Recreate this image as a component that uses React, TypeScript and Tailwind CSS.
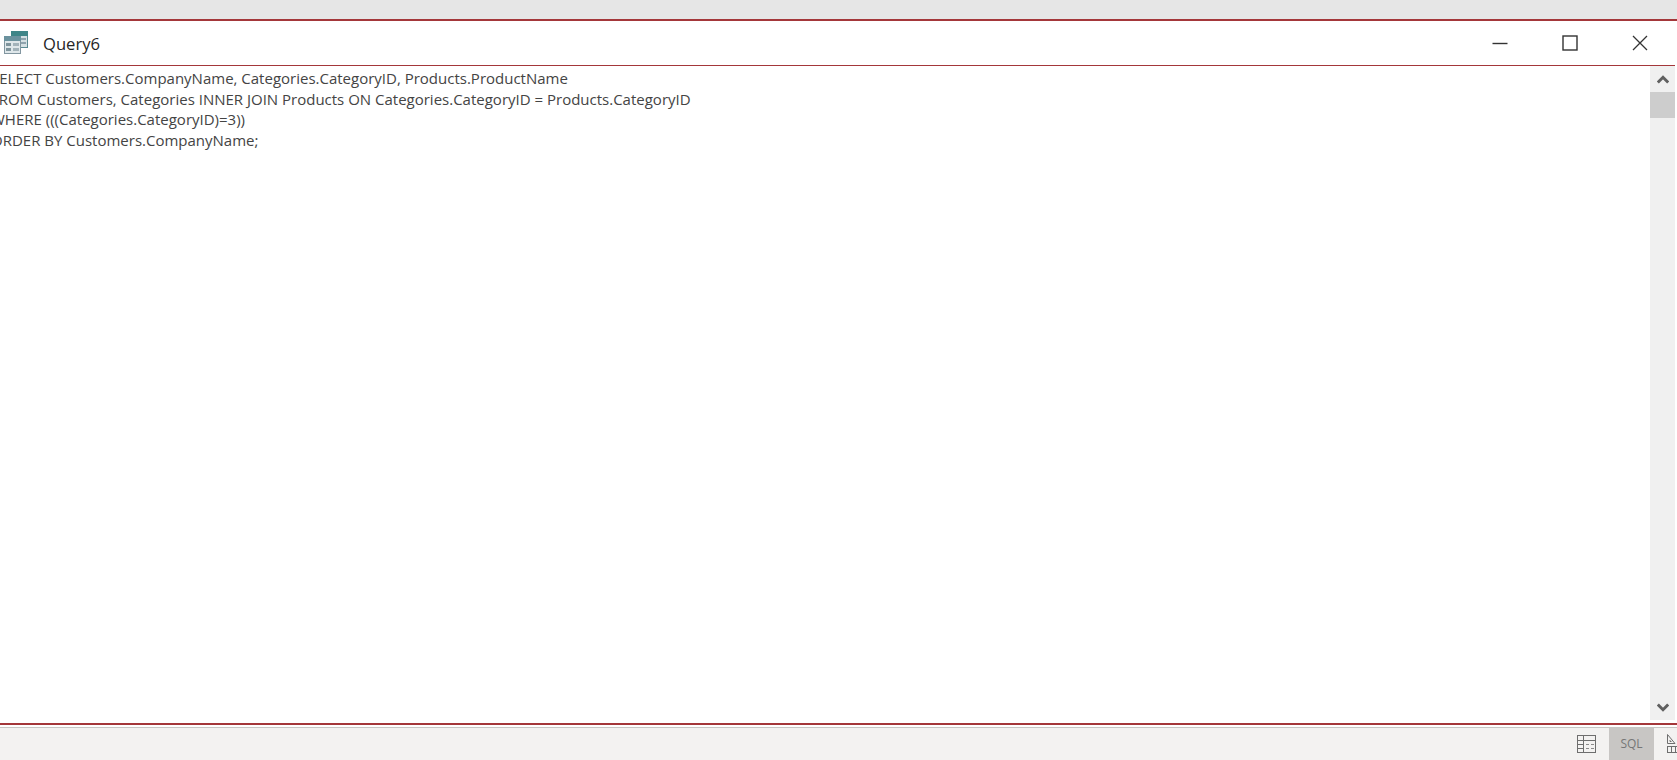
import { useState } from "react";

const sqlLines = [
  "SELECT Customers.CompanyName, Categories.CategoryID, Products.ProductName",
  "FROM Customers, Categories INNER JOIN Products ON Categories.CategoryID = Products.CategoryID",
  "WHERE (((Categories.CategoryID)=3))",
  "ORDER BY Customers.CompanyName;",
];

function QueryIcon() {
  return (
    <svg width="24" height="23" viewBox="0 0 24 23" className="shrink-0">
      <rect x="7.5" y="0.5" width="16" height="16" fill="#d5e0e3" stroke="#5b8a92" />
      <rect x="7" y="0" width="17" height="5" fill="#3f8588" />
      <rect x="17" y="7" width="5" height="2" fill="#8fa3ad" />
      <rect x="17" y="11" width="5" height="2" fill="#8fa3ad" />
      <rect x="0.5" y="5.5" width="16" height="17" fill="#dfe7ea" stroke="#8296a0" />
      <rect x="0" y="5" width="17" height="5" fill="#6b929e" />
      <rect x="2" y="12" width="5" height="3" fill="#7f949c" />
      <rect x="2" y="17" width="5" height="3" fill="#7f949c" />
      <rect x="9" y="12" width="6" height="3" fill="#a3b3ba" />
      <rect x="9" y="17" width="6" height="3" fill="#a3b3ba" />
    </svg>
  );
}

function WindowButtons() {
  return (
    <div className="flex items-center">
      <button className="w-[70px] h-[44px] flex items-center justify-center">
        <svg width="16" height="16" viewBox="0 0 16 16">
          <path d="M0.5 8.5H15.5" stroke="#333" strokeWidth="1.4" />
        </svg>
      </button>
      <button className="w-[70px] h-[44px] flex items-center justify-center">
        <svg width="16" height="16" viewBox="0 0 16 16">
          <rect x="1" y="1" width="14" height="14" fill="none" stroke="#333" strokeWidth="1.4" />
        </svg>
      </button>
      <button className="w-[70px] h-[44px] flex items-center justify-center">
        <svg width="16" height="16" viewBox="0 0 16 16">
          <path d="M1 1L15 15M15 1L1 15" stroke="#333" strokeWidth="1.3" />
        </svg>
      </button>
    </div>
  );
}

function ScrollBar() {
  return (
    <div className="w-[25px] shrink-0 flex flex-col bg-white pb-[3px]">
      <div className="h-[26px] bg-[#f0f0f0] flex items-center justify-center">
        <svg width="12" height="9" viewBox="0 0 12 9">
          <path d="M0.8 7.5L6 2.3L11.2 7.5" fill="none" stroke="#606060" strokeWidth="3" />
        </svg>
      </div>
      <div className="h-[26px] bg-[#cdcdcd]" />
      <div className="flex-1 bg-[#f0f0f0]" />
      <div className="h-[26px] bg-[#f0f0f0] flex items-center justify-center">
        <svg width="12" height="9" viewBox="0 0 12 9">
          <path d="M0.8 1.5L6 6.7L11.2 1.5" fill="none" stroke="#606060" strokeWidth="3" />
        </svg>
      </div>
    </div>
  );
}

export default function App() {
  const [view] = useState("SQL");

  return (
    <div className="h-[760px] flex flex-col overflow-hidden bg-white font-['Open_Sans','Noto_Sans',sans-serif]">
      <div className="h-[19px] bg-[#e6e6e6]" />
      <div className="h-[2px] bg-[#a4373a]" />

      {/* Title bar */}
      <div className="h-[44px] flex items-center justify-between pl-[4px] pr-[2px]">
        <div className="flex items-center gap-[15px]">
          <QueryIcon />
          <span className="text-[16.6px] text-[#262626] mt-[3px]">Query6</span>
        </div>
        <WindowButtons />
      </div>
      <div className="h-px bg-[#a4373a] mr-[2px]" />

      {/* SQL text */}
      <div className="flex-1 flex min-h-0 pr-[2px]">
        <div className="flex-1 overflow-hidden pt-[2px] text-[15px] leading-[20.7px] text-[#444444]">
          {sqlLines.map((line) => (
            <div key={line} className="-ml-[9px] whitespace-nowrap">
              {line}
            </div>
          ))}
        </div>
        <ScrollBar />
      </div>

      <div className="h-[2px] bg-[#a4373a]" />
      <div className="h-[2px] bg-white" />
      <div className="h-px bg-[#c8c6c4]" />

      {/* Status bar */}
      <div className="h-[32px] bg-[#f3f2f1] flex justify-end items-stretch">
        <div className="w-[32px] flex items-center justify-center mr-[6px]">
          <svg width="20" height="19" viewBox="0 0 20 19">
            <rect x="0.5" y="0.5" width="18" height="17" fill="none" stroke="#6e6e6e" />
            <path d="M0.5 5.5H18.5M6.5 0.5V17.5M0.5 9.5H6.5M0.5 13.5H6.5" stroke="#6e6e6e" />
            <path d="M9 9.5H12M14 9.5H17M9 13.5H12M14 13.5H17" stroke="#8a8a8a" />
          </svg>
        </div>
        <div className="w-[45px] bg-[#c8c6c4] flex items-center justify-center text-[12px] text-[#767676]">
          {view}
        </div>
        <div className="w-[23px] overflow-hidden flex items-center pl-[13px]">
          <svg width="20" height="20" viewBox="0 0 20 20" className="shrink-0">
            <path d="M0.5 0.5L8 9.5H0.5Z M3 6V7.5H4.5" fill="none" stroke="#6e6e6e" />
            <rect x="0.5" y="12.5" width="12" height="6" fill="none" stroke="#6e6e6e" />
            <path d="M4.5 12.5V18.5M8.5 12.5V18.5" stroke="#6e6e6e" />
          </svg>
        </div>
      </div>
    </div>
  );
}
